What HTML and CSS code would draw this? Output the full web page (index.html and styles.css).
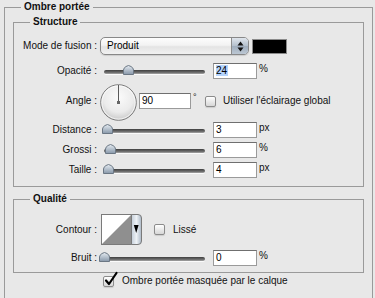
FILE: index.html
```html
<!DOCTYPE html>
<html lang="fr">
<head>
<meta charset="utf-8">
<title>Ombre portée</title>
<link rel="stylesheet" href="styles.css">
</head>
<body>
<fieldset class="group outer">
  <legend>Ombre portée</legend>

  <fieldset class="group inner structure">
    <legend>Structure</legend>

    <div class="row row-mode">
      <span class="lbl">Mode de fusion :</span>
      <div class="popup">
        <span class="popup-text">Produit</span>
        <span class="popup-arrows">
          <svg width="7" height="11" viewBox="0 0 7 11"><polygon points="0.5,4.5 3.5,0.5 6.5,4.5" fill="#111"/><polygon points="0.5,6.5 3.5,10.5 6.5,6.5" fill="#111"/></svg>
        </span>
      </div>
      <div class="swatch"></div>
    </div>

    <div class="row row-opacity">
      <span class="lbl">Opacité :</span>
      <div class="slider">
        <div class="track"></div>
        <svg class="thumb" style="left:23px" width="11" height="10" viewBox="0 0 11 10"><defs><linearGradient id="tg1" x1="0" y1="0" x2="0" y2="1"><stop offset="0" stop-color="#e6ecf2"/><stop offset="1" stop-color="#8797a9"/></linearGradient></defs><path d="M0.5,9.5 V5 Q0.5,3 3,1.5 L5.5,0.5 L8,1.5 Q10.5,3 10.5,5 V9.5 Z" fill="url(#tg1)" stroke="#6b7784"/></svg>
      </div>
      <div class="field"><span class="sel">24</span></div>
      <span class="unit">%</span>
    </div>

    <div class="row row-angle">
      <span class="lbl">Angle :</span>
      <svg class="dial" width="37" height="37" viewBox="0 0 37 37">
        <defs><radialGradient id="dg" cx="50%" cy="35%" r="65%"><stop offset="0" stop-color="#fbfbfb"/><stop offset="0.65" stop-color="#ebebeb"/><stop offset="1" stop-color="#c9c9c9"/></radialGradient></defs>
        <circle cx="18.5" cy="18.5" r="17.8" fill="url(#dg)" stroke="#7b7b7b"/>
        <circle cx="18.5" cy="18.5" r="16.6" fill="none" stroke="#ffffff" stroke-opacity="0.7"/>
        <line x1="18.5" y1="1" x2="18.5" y2="18" stroke="#5a5a5a"/>
        <rect x="17" y="17" width="3" height="3" fill="#666"/>
      </svg>
      <div class="field field-angle">90</div>
      <span class="deg">°</span>
      <span class="cb cb-angle"></span>
      <span class="cb-text cb-text-angle">Utiliser l'éclairage global</span>
    </div>

    <div class="row">
      <span class="lbl">Distance :</span>
      <div class="slider">
        <div class="track"></div>
        <svg class="thumb" style="left:2px" width="11" height="10" viewBox="0 0 11 10"><defs><linearGradient id="tg2" x1="0" y1="0" x2="0" y2="1"><stop offset="0" stop-color="#e6ecf2"/><stop offset="1" stop-color="#8797a9"/></linearGradient></defs><path d="M0.5,9.5 V5 Q0.5,3 3,1.5 L5.5,0.5 L8,1.5 Q10.5,3 10.5,5 V9.5 Z" fill="url(#tg2)" stroke="#6b7784"/></svg>
      </div>
      <div class="field">3</div>
      <span class="unit">px</span>
    </div>

    <div class="row">
      <span class="lbl">Grossi :</span>
      <div class="slider">
        <div class="track"></div>
        <svg class="thumb" style="left:5px" width="11" height="10" viewBox="0 0 11 10"><defs><linearGradient id="tg3" x1="0" y1="0" x2="0" y2="1"><stop offset="0" stop-color="#e6ecf2"/><stop offset="1" stop-color="#8797a9"/></linearGradient></defs><path d="M0.5,9.5 V5 Q0.5,3 3,1.5 L5.5,0.5 L8,1.5 Q10.5,3 10.5,5 V9.5 Z" fill="url(#tg3)" stroke="#6b7784"/></svg>
      </div>
      <div class="field">6</div>
      <span class="unit">%</span>
    </div>

    <div class="row">
      <span class="lbl">Taille :</span>
      <div class="slider">
        <div class="track"></div>
        <svg class="thumb" style="left:3px" width="11" height="10" viewBox="0 0 11 10"><defs><linearGradient id="tg4" x1="0" y1="0" x2="0" y2="1"><stop offset="0" stop-color="#e6ecf2"/><stop offset="1" stop-color="#8797a9"/></linearGradient></defs><path d="M0.5,9.5 V5 Q0.5,3 3,1.5 L5.5,0.5 L8,1.5 Q10.5,3 10.5,5 V9.5 Z" fill="url(#tg4)" stroke="#6b7784"/></svg>
      </div>
      <div class="field">4</div>
      <span class="unit">px</span>
    </div>
  </fieldset>

  <fieldset class="group inner quality">
    <legend>Qualité</legend>

    <div class="row row-contour">
      <span class="lbl">Contour :</span>
      <svg class="contour" width="41" height="31" viewBox="0 0 41 31">
        <defs><linearGradient id="cg" x1="0" y1="0" x2="1" y2="0"><stop offset="0" stop-color="#c4ced9"/><stop offset="0.5" stop-color="#eef2f6"/><stop offset="1" stop-color="#aab7c5"/></linearGradient></defs>
        <rect x="0.5" y="0.5" width="30" height="30" fill="#fff" stroke="#7a7a7a"/>
        <polygon points="1,30 30,1 30,30" fill="#8f8f8f"/>
        <path d="M30.5,0.5 H37 Q40.5,0.5 40.5,4 V27 Q40.5,30.5 37,30.5 H30.5 Z" fill="url(#cg)" stroke="#7a7a7a"/>
        <polygon points="32.8,11 37.6,11 35.2,19" fill="#000"/>
      </svg>
      <span class="cb cb-lisse"></span>
      <span class="cb-text cb-text-lisse">Lissé</span>
    </div>

    <div class="row row-noise">
      <span class="lbl">Bruit :</span>
      <div class="slider">
        <div class="track"></div>
        <svg class="thumb" style="left:-1px" width="11" height="10" viewBox="0 0 11 10"><defs><linearGradient id="tg5" x1="0" y1="0" x2="0" y2="1"><stop offset="0" stop-color="#e6ecf2"/><stop offset="1" stop-color="#8797a9"/></linearGradient></defs><path d="M0.5,9.5 V5 Q0.5,3 3,1.5 L5.5,0.5 L8,1.5 Q10.5,3 10.5,5 V9.5 Z" fill="url(#tg5)" stroke="#6b7784"/></svg>
      </div>
      <div class="field">0</div>
      <span class="unit">%</span>
    </div>
  </fieldset>

  <div class="row row-knockout">
    <span class="cb cb-checked">
      <svg class="check" width="14" height="15" viewBox="0 0 14 15"><path d="M2,8.5 L5,12 L12.5,1" fill="none" stroke="#000" stroke-width="2.2" stroke-linecap="round" stroke-linejoin="round"/></svg>
    </span>
    <span class="cb-text cb-text-knockout">Ombre portée masquée par le calque</span>
  </div>
</fieldset>
</body>
</html>
```

FILE: styles.css
```css
* { box-sizing: border-box; }

html, body {
  margin: 0;
  padding: 0;
}

body {
  width: 375px;
  height: 298px;
  overflow: hidden;
  background: #e8e8e8;
  font-family: "Liberation Sans", Arial, sans-serif;
  font-size: 10px;
  color: #111;
}

.group {
  border: 1px solid #9a9a9a;
  margin: 0;
  padding: 0;
  min-width: 0;
}

.group > legend {
  font-weight: bold;
  font-size: 10px;
  line-height: 12px;
  padding: 0 3px;
  margin-left: 16px;
  color: #111;
}

/* the outer group continues below the visible window area */
.outer {
  margin: 1px 0 0 4px;
  width: 369px;
  height: 297px;
  border-bottom: none;
}

.inner {
  margin: 3px 0 0 8px;
  width: 351px;
}

.structure {
  padding: 0 0 6px 0;
}

.quality {
  margin-top: 6px;
  padding: 0 0 4px 0;
}

.row {
  display: flex;
  align-items: center;
  height: 20px;
}

.lbl {
  flex: none;
  width: 83px;
  margin-right: 3px;
  text-align: right;
  line-height: 12px;
  white-space: nowrap;
}

/* Mode de fusion */
.row-mode {
  margin-top: 8px;
}

.popup {
  display: flex;
  width: 149px;
  height: 18px;
  border: 1px solid #888;
  border-radius: 5px;
  overflow: hidden;
  background: linear-gradient(#fdfdfd, #f3f3f3 45%, #e4e4e4 55%, #f1f1f1);
  box-shadow: 0 1px 1px rgba(0, 0, 0, 0.12);
}

.popup-text {
  flex: 1;
  padding-left: 6px;
  line-height: 16px;
  color: #000;
}

.popup-arrows {
  flex: none;
  width: 17px;
  border-left: 1px solid #8c8c8c;
  background: linear-gradient(#dfe5ec, #b3bfcc 50%, #9fadbd 51%, #bcc7d3);
  display: flex;
  align-items: center;
  justify-content: center;
}

.popup-arrows svg {
  display: block;
}

.swatch {
  width: 35px;
  height: 15px;
  margin-left: 3px;
  background: #000;
  border: 1px solid #8a8a8a;
}

/* sliders */
.row-opacity {
  margin-top: 5px;
}

.slider {
  position: relative;
  flex: none;
  width: 109px;
  height: 20px;
}

.track {
  margin: 9px 0 0 4px;
  width: 101px;
  height: 4px;
  border-radius: 2px;
  background: linear-gradient(#3f3f3f, #6c6c6c 60%, #a9a9a9);
  box-shadow: 0 1px 0 rgba(255, 255, 255, 0.8);
}

.thumb {
  position: absolute;
  top: 4px;
  display: block;
}

.field {
  flex: none;
  width: 44px;
  height: 16px;
  margin-left: 4px;
  padding-left: 2px;
  background: #fff;
  border: 1px solid #9a9a9a;
  border-top-color: #6f6f6f;
  line-height: 14px;
  color: #000;
}

.sel {
  background: #b4d3fb;
  padding-right: 1px;
}

.unit {
  margin-left: 2px;
  line-height: 12px;
  margin-top: -4px;
}

/* angle */
.row-angle {
  height: 39px;
  align-items: flex-start;
}

.row-angle .lbl {
  margin-top: 14px;
}

.dial {
  display: block;
  flex: none;
  margin-top: 3px;
}

.field-angle {
  width: 52px;
  margin-left: 2px;
  margin-top: 12px;
}

.deg {
  width: 6px;
  margin-left: 2px;
  margin-top: 11px;
  line-height: 10px;
  font-size: 9px;
}

.cb {
  flex: none;
  display: block;
  width: 11px;
  height: 11px;
  border: 1px solid #8b8b8b;
  border-radius: 2px;
  background: linear-gradient(#ffffff, #e6e6e6 60%, #d7d7d7);
  box-shadow: 0 1px 1px rgba(0, 0, 0, 0.12);
}

.cb-angle {
  margin-left: 6px;
  margin-top: 15px;
}

.cb-text {
  line-height: 12px;
  white-space: nowrap;
}

.cb-text-angle {
  margin-left: 7px;
  margin-top: 14px;
}

/* qualité */
.row-contour {
  margin-top: 9px;
  height: 31px;
}

.contour {
  display: block;
  flex: none;
  margin-left: 1px;
}

.cb-lisse {
  margin-left: 12px;
}

.cb-text-lisse {
  margin-left: 8px;
}

.row-noise {
  margin-top: 3px;
}

/* bottom checkbox */
.row-knockout {
  height: 16px;
  padding-left: 98px;
}

.cb-checked {
  position: relative;
}

.check {
  position: absolute;
  left: 0;
  top: -5px;
  overflow: visible;
}

.cb-text-knockout {
  margin-left: 8px;
}
```
